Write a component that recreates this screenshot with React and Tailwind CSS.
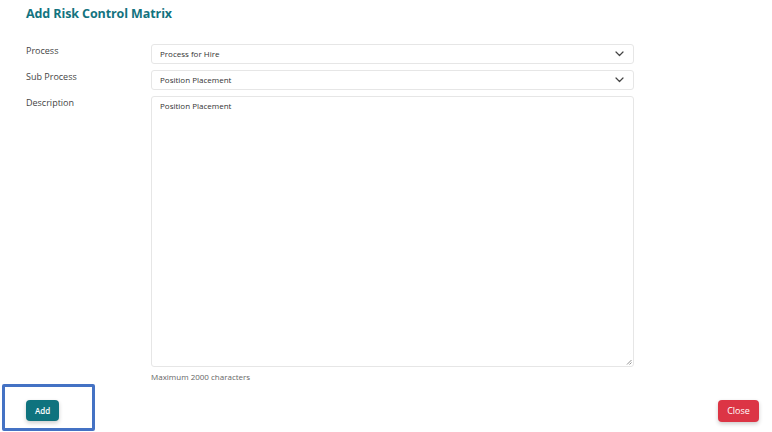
import React from "react";

const Chevron = () => (
  <svg width="9" height="6" viewBox="0 0 9 6" fill="none" stroke="#444" strokeWidth="1.2" strokeLinecap="round" strokeLinejoin="round">
    <path d="M1 1l3.5 3.5L8 1" />
  </svg>
);

function Row({ label, children }) {
  return (
    <div className="flex">
      <div className="w-[125px] shrink-0 text-[9px] text-[#444]">{label}</div>
      <div className="w-[483px]">{children}</div>
    </div>
  );
}

function Select({ value }) {
  return (
    <div className="flex h-[20px] items-center justify-between rounded-[3px] border border-[#e6e6e6] pl-[8px] pr-[9px] text-[8px] text-[#333]">
      <span>{value}</span>
      <Chevron />
    </div>
  );
}

export default function App() {
  return (
    <div className="relative h-[432px] w-[772px] bg-white" style={{ fontFamily: '"Open Sans", sans-serif' }}>
      <div className="flex h-full flex-col pl-[26px] pr-[13px]">
        <h1 className="mt-[5px] text-[12.5px] font-bold tracking-[-0.1px] text-[#13737f]">Add Risk Control Matrix</h1>
        <div className="mt-[20px] flex flex-col gap-[6px]">
          <Row label="Process"><Select value="Process for Hire" /></Row>
          <Row label="Sub Process"><Select value="Position Placement" /></Row>
          <Row label="Description">
            <div className="relative h-[271px] rounded-[3px] border border-[#e6e6e6] px-[8px] pt-[3px] text-[8px] text-[#333]">
              Position Placement
              <svg className="absolute bottom-[1px] right-[1px]" width="6" height="6" viewBox="0 0 6 6" stroke="#777" strokeWidth="0.8">
                <path d="M1 5.5L5.5 1M3.5 5.5L5.5 3.5" />
              </svg>
            </div>
            <div className="mt-[4px] text-[8px] text-[#666]">Maximum 2000 characters</div>
          </Row>
        </div>
        <div className="mt-[17px] flex items-center justify-between">
          <button className="h-[21px] w-[33px] rounded-[4px] bg-[#0f737e] text-[8px] font-semibold text-white shadow-[0_2px_4px_rgba(0,0,0,0.2)]">Add</button>
          <button className="h-[22px] w-[41px] rounded-[4px] bg-[#dc3545] text-[9px] text-white shadow-[0_2px_4px_rgba(0,0,0,0.2)]">Close</button>
        </div>
      </div>
      <div className="pointer-events-none absolute left-[2px] top-[384px] h-[47px] w-[93px] rounded-[2px] border-[3px] border-[#4472c4]" />
    </div>
  );
}
